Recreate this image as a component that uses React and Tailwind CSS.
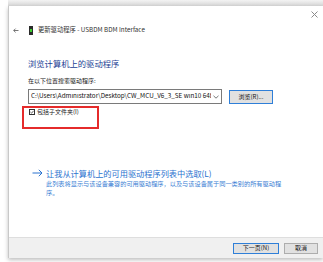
import React from 'react';

const font = { fontFamily: '"Noto Sans CJK SC", "Liberation Sans", sans-serif' };

const App = () => {
  return (
    <div className="w-[323px] h-[262px] bg-white overflow-hidden" style={font}>
      {/* strip of the window above */}
      <div className="ml-[8px] h-[6px] bg-gradient-to-b from-[#f3f3f3] to-[#d6d6d6]" />
      <div className="ml-[8px] w-[315px] h-[252px] flex flex-col bg-white border-l border-[#c8c8c8] shadow-[0_2px_4px_rgba(0,0,0,0.25)]">
        {/* close row */}
        <div className="h-[16px] flex justify-end items-center pr-[5px]">
          <svg width="7" height="7" viewBox="0 0 7 7">
            <path d="M0.5 0.5 L6.5 6.5 M6.5 0.5 L0.5 6.5" stroke="#8a8a8a" strokeWidth="1" />
          </svg>
        </div>
        {/* title row */}
        <div className="flex items-center h-[16px] pl-[4px] text-[#333]">
          <svg width="6" height="5" viewBox="0 0 6 5">
            <path d="M5.5 2.5 H0.8 M2.6 0.6 L0.7 2.5 L2.6 4.4" stroke="#555" strokeWidth="0.8" fill="none" />
          </svg>
          <span className="ml-[10px] w-[4px] h-[9px] bg-[#2b2b2b] flex items-center justify-center">
            <span className="w-[2px] h-[3px] bg-[#3bd12f]" />
          </span>
          <span className="ml-[5px] text-[6.3px] leading-none whitespace-nowrap">更新驱动程序 - USBDM BDM Interface</span>
        </div>
        {/* body */}
        <div className="flex-1 pl-[19px] pr-[8px]">
          <div className="mt-[19px] h-[12px] flex items-center text-[8.3px] leading-none text-[#1c3f94] whitespace-nowrap">浏览计算机上的驱动程序</div>
          <div className="mt-[7px] h-[10px] flex items-center text-[6px] leading-none text-[#222] whitespace-nowrap">在以下位置搜索驱动程序:</div>
          <div className="mt-[3px] flex items-center">
            <div className="w-[194px] h-[15px] border border-[#7a7a7a] flex items-center pl-[2px] pr-[2px] text-[6.3px] leading-none text-[#111] whitespace-nowrap">
              <span className="flex-1 min-w-0 overflow-hidden">C:\Users\Administrator\Desktop\CW_MCU_V6_3_SE win10 64bit</span>
              <svg width="6" height="4" viewBox="0 0 6 4" className="ml-[2px] shrink-0">
                <path d="M0.5 0.8 L3 3.2 L5.5 0.8" stroke="#555" strokeWidth="0.8" fill="none" />
              </svg>
            </div>
            <div className="ml-[7px] w-[44px] h-[14px] border border-[#2f7fd8] bg-[#e1e1e1] flex items-center justify-center text-[6px] leading-none text-[#111] whitespace-nowrap">
              浏览(R)...
            </div>
          </div>
          <div className="relative mt-[2px] -ml-[6px] w-[77px] h-[23px] border-2 border-[#e52b2b]">
            <div className="absolute left-[5px] top-0 h-[8px] flex items-center">
              <span className="w-[6px] h-[6px] border border-[#333] flex items-center justify-center">
                <svg width="4" height="4" viewBox="0 0 4 4">
                  <path d="M0.4 2 L1.6 3.2 L3.6 0.8" stroke="#222" strokeWidth="0.7" fill="none" />
                </svg>
              </span>
              <span className="ml-[2px] text-[6px] leading-none text-[#222] whitespace-nowrap">包括子文件夹(I)</span>
            </div>
          </div>
          <div className="mt-[38px] h-[12px] pl-[4px] flex items-center text-[8.2px] leading-none text-[#2b73cf] whitespace-nowrap">
            <svg width="11" height="8" viewBox="0 0 11 8" className="shrink-0">
              <path d="M0.5 4 H10 M6.8 0.8 L10 4 L6.8 7.2" stroke="#2b73cf" strokeWidth="1" fill="none" />
            </svg>
            <span className="ml-[3px]">让我从计算机上的可用驱动程序列表中选取(L)</span>
          </div>
          <div className="pl-[18px] text-[6.2px] leading-[9px] text-[#3a80d4] whitespace-nowrap">
            此列表将显示与该设备兼容的可用驱动程序，以及与该设备属于同一类别的所有驱动程
            <br />
            序。
          </div>
        </div>
        {/* footer */}
        <div className="h-[21px] bg-[#f0f0f0] border-t border-[#dedede] flex items-center justify-end pr-[5px] gap-[5px]">
          <div className="w-[46px] h-[11px] border border-[#2f7fd8] bg-[#e1e1e1] flex items-center justify-center text-[6px] text-[#111] leading-none whitespace-nowrap">
            下一页(N)
          </div>
          <div className="w-[34px] h-[11px] border border-[#adadad] bg-[#e1e1e1] flex items-center justify-center text-[6px] text-[#111] leading-none whitespace-nowrap">
            取消
          </div>
        </div>
      </div>
    </div>
  );
};

export default App;
